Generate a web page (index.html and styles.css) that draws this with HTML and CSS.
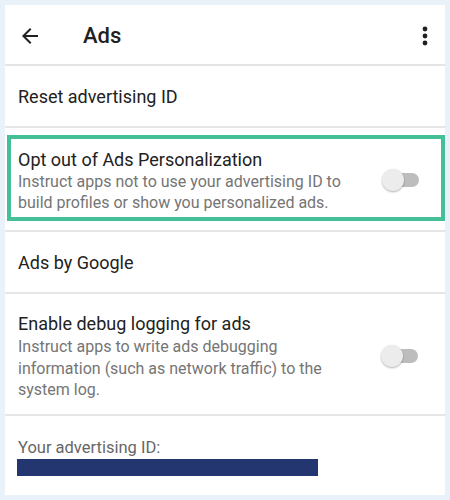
FILE: index.html
```html
<!DOCTYPE html>
<html lang="en">
<head>
  <meta charset="UTF-8">
  <meta name="viewport" content="width=device-width, initial-scale=1.0">
  <title>Ads</title>
  <link rel="stylesheet" href="styles.css">
</head>
<body>
  <div class="panel">
    <div class="toolbar">
      <svg class="back" width="24" height="24" viewBox="0 0 24 24">
        <path d="M20 11H7.83l5.59-5.59L12 4l-8 8 8 8 1.41-1.41L7.83 13H20v-2z" fill="#212121"/>
      </svg>
      <h1>Ads</h1>
      <svg class="menu" width="10" height="28" viewBox="0 0 10 28">
        <circle cx="5" cy="7" r="2.4" fill="#212121"/>
        <circle cx="5" cy="14" r="2.4" fill="#212121"/>
        <circle cx="5" cy="21" r="2.4" fill="#212121"/>
      </svg>
    </div>

    <div class="row single">
      <span class="title">Reset advertising ID</span>
    </div>

    <div class="row highlight">
      <div class="frame">
        <div class="text">
          <div class="title">Opt out of Ads Personalization</div>
          <div class="sub">Instruct apps not to use your advertising ID to build profiles or show you personalized ads.</div>
        </div>
        <div class="switch"><span class="thumb"></span></div>
      </div>
    </div>

    <div class="row single">
      <span class="title">Ads by Google</span>
    </div>

    <div class="row debug">
      <div class="text">
        <div class="title">Enable debug logging for ads</div>
        <div class="sub">Instruct apps to write ads debugging information (such as network traffic) to the system log.</div>
      </div>
      <div class="switch"><span class="thumb"></span></div>
    </div>

    <div class="row id-row">
      <div class="id-label">Your advertising ID:</div>
      <div class="id-bar"></div>
    </div>
  </div>
</body>
</html>
```

FILE: styles.css
```css
body {
  margin: 0;
  background: #eaf2f9;
  font-family: Roboto, "Liberation Sans", sans-serif;
  color: #212121;
}

.panel {
  margin: 5px;
  width: 440px;
  height: 490px;
  background: #fff;
  overflow: hidden;
}

.toolbar {
  display: flex;
  align-items: center;
  height: 59px;
  padding: 0 6px 0 13px;
  border-bottom: 2px solid #e4e4e4;
}

.back {
  margin-top: 3px;
}

.toolbar h1 {
  flex: 1;
  margin: 0 0 0 41px;
  font-size: 22px;
  font-weight: 500;
  line-height: 28px;
  padding-top: 2px;
}

.menu {
  margin-right: 9px;
  margin-top: 3px;
}

.row {
  border-bottom: 2px solid #e6e6e6;
}

.title {
  font-size: 18px;
  line-height: 22px;
}

.sub {
  font-size: 16px;
  line-height: 21px;
  color: #757575;
}

.single {
  display: flex;
  align-items: center;
  height: 60px;
  padding: 0 13px;
}

.single .title {
  padding-top: 2px;
}

.highlight {
  padding: 7px 0 9px 2px;
}

.frame {
  display: flex;
  align-items: center;
  border: 4px solid #44bf98;
  padding: 10px 22px 4px 7px;
}

.text {
  flex: 1;
}

.highlight .sub {
  width: 340px;
}

.switch {
  position: relative;
  width: 33px;
  height: 14px;
  border-radius: 7px;
  background: #bdbdbd;
  margin-left: 8px;
}

.thumb {
  position: absolute;
  left: -4px;
  top: -4px;
  width: 22px;
  height: 22px;
  border-radius: 50%;
  background: #ececec;
  box-shadow: 0 1px 2px rgba(0, 0, 0, 0.3);
}

.highlight .switch {
  margin-top: -2px;
}

.debug {
  display: flex;
  align-items: center;
  height: 120px;
  padding: 0 27px 0 13px;
}

.debug .text {
  padding-top: 6px;
}

.debug .sub {
  width: 320px;
  margin-top: 1px;
  line-height: 21.5px;
}

.debug .switch {
  margin-top: 3px;
}

.id-row {
  border-bottom: none;
  padding: 21px 13px 0 12px;
}

.id-label {
  font-size: 16.5px;
  line-height: 22px;
  color: #666;
  padding-left: 1px;
}

.id-bar {
  width: 301px;
  height: 17px;
  margin-top: 0;
  background: #233670;
}
```
